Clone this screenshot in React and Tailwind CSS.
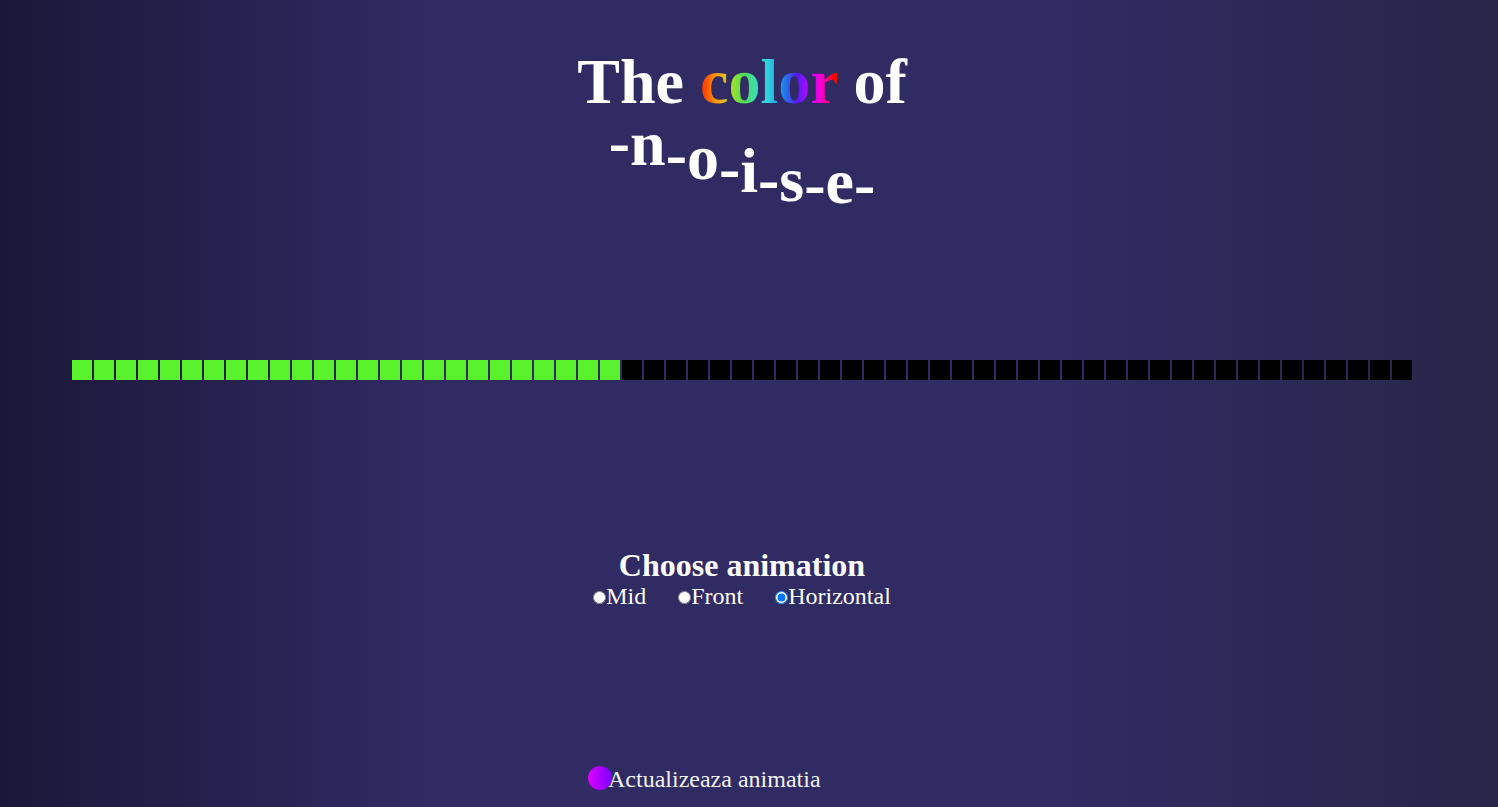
import { useState } from "react";

const WAVE = [
  ["-", -4],
  ["n", -2],
  ["-", 8],
  ["o", 12],
  ["-", 22],
  ["i", 25],
  ["-", 33],
  ["s", 34],
  ["-", 38],
  ["e", 36],
  ["-", 38],
];

const CELLS = 61;
const LEVEL = 25;
const MODES = ["Mid", "Front", "Horizontal"];

function Title() {
  return (
    <h1 className="text-center text-[64px] leading-[64px] font-bold">
      <div>
        The{" "}
        <span className="bg-[linear-gradient(90deg,#ff2400_0%,#ff9500_11%,#e8b71d_17%,#a0e030_24%,#4bdc50_32%,#3fdcb8_41%,#30cfe0_50%,#1e82e8_61%,#5a18f5_71%,#9a10ff_77%,#f000e0_87%,#ff0090_93%,#ff0000_97%)] bg-clip-text text-transparent">
          color
        </span>{" "}
        of
      </div>
      <div className="flex justify-center">
        {WAVE.map(([char, shift], i) => (
          <span key={i} style={{ transform: `translateY(${shift}px)` }}>
            {char}
          </span>
        ))}
      </div>
    </h1>
  );
}

function LevelBar() {
  return (
    <div className="flex flex-wrap justify-center gap-[2px]">
      {Array.from({ length: CELLS }, (_, i) => (
        <div key={i} className={i < LEVEL ? "size-5 bg-[#5af22d]" : "size-5 bg-black"} />
      ))}
    </div>
  );
}

function ModePicker() {
  const [mode, setMode] = useState("Horizontal");
  return (
    <fieldset>
      <legend className="w-full text-center text-[32px] leading-8 font-bold">Choose animation</legend>
      <div className="flex flex-wrap justify-center gap-x-8">
        {MODES.map((name) => (
          <label key={name} className="flex items-center text-2xl leading-[30px]">
            <input
              type="radio"
              name="animation"
              value={name}
              checked={mode === name}
              onChange={() => setMode(name)}
              className="mt-[2px] size-[13px]"
            />
            {name}
          </label>
        ))}
      </div>
    </fieldset>
  );
}

export default function App() {
  return (
    <main className="flex min-h-screen flex-col items-center bg-[linear-gradient(90deg,#1b1739_0%,#302b63_29%,#302b63_70%,#282549_100%)] pt-[50px] pr-[14px] pb-3 font-['Liberation_Serif',serif] text-white">
      <Title />
      <div className="mt-[182px]">
        <LevelBar />
      </div>
      <div className="mt-[169px]">
        <ModePicker />
      </div>
      <button
        type="button"
        className="relative mt-[155px] w-[308px] pl-5 text-left text-2xl leading-[26px] text-[#f2f2f2]"
      >
        <span className="absolute top-0 left-0 size-6 rounded-full bg-[linear-gradient(90deg,#dd00ff,#7a00ff)]" />
        <span className="relative">Actualizeaza animatia</span>
      </button>
    </main>
  );
}
